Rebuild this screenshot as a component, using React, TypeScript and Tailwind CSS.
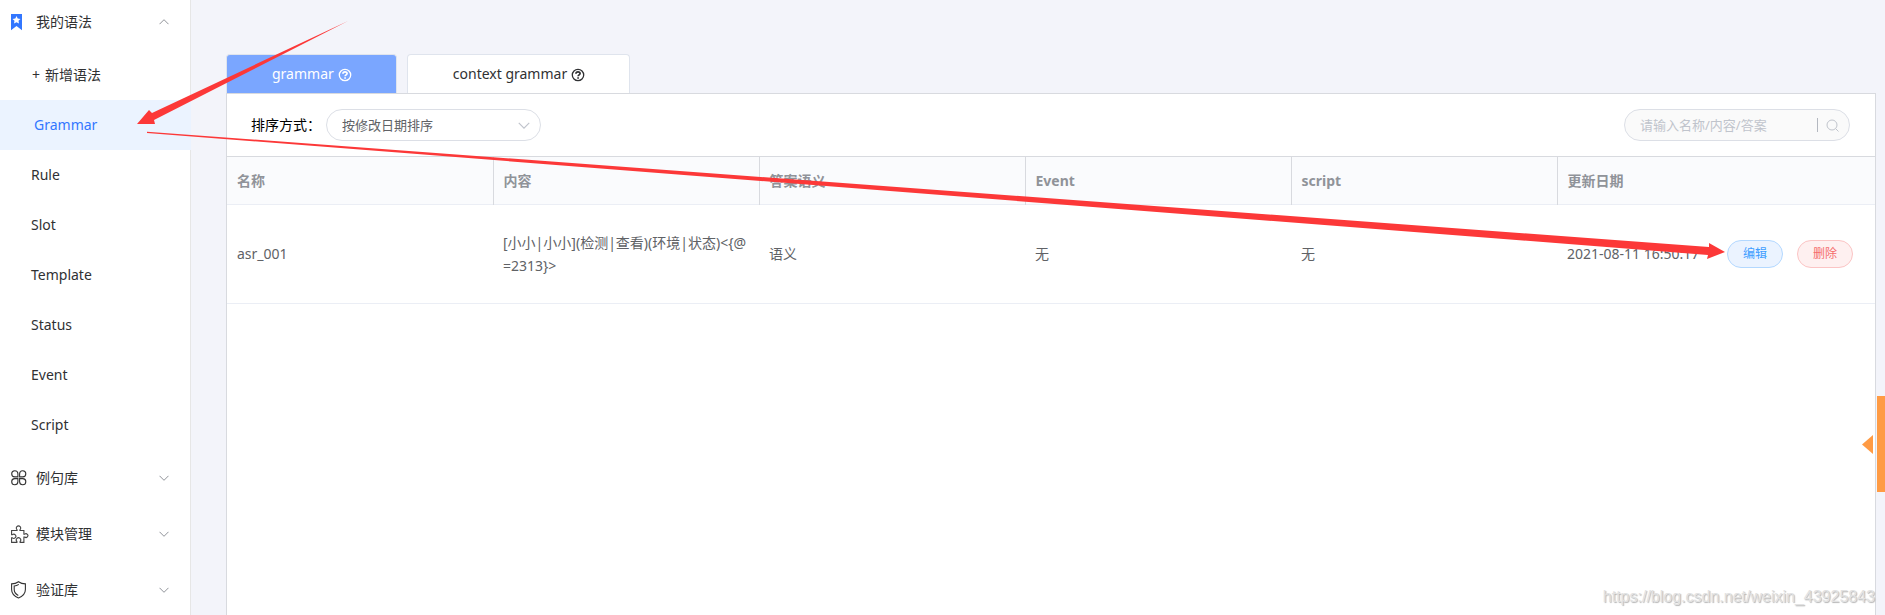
import React from "react";

const subItems = ["Rule", "Slot", "Template", "Status", "Event", "Script"];
const columns = ["名称", "内容", "答案语义", "Event", "script"];

function Chevron({ up = false, className = "" }: { up?: boolean; className?: string }) {
  return (
    <svg viewBox="0 0 10 6" fill="none" stroke="currentColor" className={className}>
      <path d={up ? "M0.5 5.2 5 0.7 9.5 5.2" : "M0.5 0.8 5 5.3 9.5 0.8"} />
    </svg>
  );
}

function BookmarkIcon() {
  return (
    <svg viewBox="0 0 16 17" className="h-[17px] w-4">
      <path fill="#3377ff" d="M0 0h11v16.2l-5.500-4.200L0 16.200z" />
      <path fill="#fff" d="m5.500 2 1.200 2.500 2.800.4-2 1.900.5 2.800-2.500-1.300L3 9.600l.5-2.800-2-1.900 2.800-.4z" />
    </svg>
  );
}

function CloverIcon() {
  return (
    <svg viewBox="0 0 16 16" fill="none" stroke="#333" strokeWidth="1.1" className="size-4">
      <path d="M6.900 6.900H3.700a3.100 3.100 0 1 1 3.200-3.200zM8.600 6.900V3.700a3.100 3.100 0 1 1 3.200 3.200zM6.900 8.600v3.200a3.100 3.100 0 1 1-3.200-3.200zM8.600 8.600h3.200a3.100 3.100 0 1 1-3.200 3.200z" />
    </svg>
  );
}

function PuzzleIcon() {
  return (
    <svg viewBox="0 0 18 18" fill="none" stroke="#444" strokeWidth="1.1" className="h-[18px] w-[18px]">
      <path d="M.6 5.500h5.500V4.800a2.200 2.200 0 1 1 2.800 0v.7h4v3.700h.8a1.900 1.900 0 1 1 0 2.800h-.8v5.400H9.100v-.9a2.200 2.200 0 1 0-3.200 0v.9H.6v-4.500h.8a2.100 2.100 0 1 0 0-3.200H.6z" />
    </svg>
  );
}

function ShieldIcon() {
  return (
    <svg viewBox="0 0 16 18" fill="none" stroke="#333" strokeWidth="1.100" className="h-[18px] w-4">
      <path d="M7.500.7c2 1.500 4.300 2.200 6.900 2.200v5.600c0 4-3 6.900-6.900 8.500C3.600 15.400.6 12.500.6 8.500V2.900C3.200 2.900 5.500 2.200 7.500.7z" />
      <path d="M7.800 3.400C6.400 4.400 4.800 4.900 3.200 5v3.600c0 2.800 1.700 4.700 4.100 5.900" />
    </svg>
  );
}

function HelpIcon() {
  return (
    <svg viewBox="0 0 14 14" fill="none" stroke="currentColor" className="mt-0.5 size-3.5">
      <circle cx="7" cy="7" r="5.700" strokeWidth="1.300" />
      <path d="M4.900 5.700C5 4.300 5.900 3.800 7 3.800s2.100.6 2.100 1.700c0 1.300-2 1.400-2 2.700M7.100 9.200v1.600" strokeWidth="1.700" />
    </svg>
  );
}

function MenuHeader({ icon, label, open = false }: { icon: React.ReactNode; label: string; open?: boolean }) {
  return (
    <button
      type="button"
      className={`flex w-full shrink-0 items-center pr-[21px] pl-[11px] text-left ${open ? "h-[50px] pb-1.5" : "h-14"}`}
    >
      <span className="w-[25px]">{icon}</span>
      <span className="flex-1">{label}</span>
      <Chevron up={open} className="h-1.5 w-2.5 text-[#909399]" />
    </button>
  );
}

export default function App() {
  return (
    <div
      className="relative flex h-screen overflow-hidden bg-[#f3f4fa] text-sm text-[#303133]"
      style={{ fontFamily: '"Noto Sans", "Noto Sans CJK SC", sans-serif' }}
    >
      <nav className="flex w-[191px] shrink-0 flex-col border-r border-[#e6e6e6] bg-white">
        <MenuHeader icon={<BookmarkIcon />} label="我的语法" open />
        <a href="#new" className="flex h-[50px] shrink-0 items-center gap-[5px] pl-8">
          <span>+</span>
          <span>新增语法</span>
        </a>
        <a href="#grammar" className="-mr-px flex h-[50px] shrink-0 items-center bg-[#ebf3ff] pl-[34px] text-[#3377ff]">
          Grammar
        </a>
        {subItems.map((s) => (
          <a key={s} href={`#${s}`} className="flex h-[50px] shrink-0 items-center pl-[31px]">
            {s}
          </a>
        ))}
        <MenuHeader icon={<CloverIcon />} label="例句库" />
        <MenuHeader icon={<PuzzleIcon />} label="模块管理" />
        <MenuHeader icon={<ShieldIcon />} label="验证库" />
      </nav>

      <main className="flex min-w-0 flex-1 flex-col pt-[54px] pr-[9px] pl-[35px]">
        <div className="flex gap-2.5">
          <button
            type="button"
            className="flex h-[39px] items-center gap-1 rounded-t border border-b-0 border-[#dfe4ed] bg-[#7aa6ff] pr-11 pl-[45px] text-white"
          >
            grammar <HelpIcon />
          </button>
          <button
            type="button"
            className="flex h-[39px] items-center gap-1 rounded-t border border-b-0 border-[#dfe4ed] bg-white pr-11 pl-[45px]"
          >
            context grammar <HelpIcon />
          </button>
        </div>

        <section className="flex-1 border border-b-0 border-[#d8dadf] bg-white">
          <div className="flex h-[62px] items-center justify-between pr-[25px] pl-6">
            <div className="flex items-center">
              <label htmlFor="sort" className="w-[75px] text-black">排序方式：</label>
              <div className="relative flex items-center">
                <select
                  id="sort"
                  className="h-8 w-[215px] appearance-none rounded-full border border-[#dcdfe6] bg-white pl-[15px] text-[13px] text-[#606266]"
                >
                  <option>按修改日期排序</option>
                </select>
                <Chevron className="pointer-events-none absolute right-[11px] h-[7px] w-3 text-[#c0c4cc]" />
              </div>
            </div>
            <div className="flex h-8 w-[226px] items-center rounded-full border border-[#dcdfe6] bg-[#fafafa] pr-2.5 pl-[15px] text-[#c0c4cc]">
              <input
                type="text"
                aria-label="请输入名称/内容/答案"
                placeholder="请输入名称/内容/答案"
                className="min-w-0 flex-1 bg-transparent text-[13px] outline-none placeholder:text-[#c0c4cc]"
              />
              <span className="mr-2 h-3.5 w-px bg-[#b4b8c0]" />
              <button type="button" aria-label="搜索">
                <svg viewBox="0 0 13 13" fill="none" stroke="currentColor" className="block size-[13px]">
                  <circle cx="6" cy="6" r="5" />
                  <path d="m9.700 9.700 2.800 2.800" />
                </svg>
              </button>
            </div>
          </div>

          <table className="w-full table-fixed border-collapse text-left text-[#606266]">
            <colgroup>
              <col className="w-[266px]" />
              <col className="w-[266px]" />
              <col className="w-[266px]" />
              <col className="w-[266px]" />
              <col className="w-[266px]" />
              <col />
            </colgroup>
            <thead>
              <tr className="h-12 border-t border-b border-t-[#d8dadf] border-b-[#ebeef5] bg-[#fafbfd] text-[#909399]">
                {columns.map((c) => (
                  <th key={c} className="border-r border-[#d8dadf] px-2.5 font-bold">{c}</th>
                ))}
                <th className="px-2.5 font-bold">更新日期</th>
              </tr>
            </thead>
            <tbody>
              <tr className="h-[99px] border-b border-[#ebeef5]">
                <td className="px-2.5">asr_001</td>
                <td className="pr-2 pl-2.5 leading-[23px] break-all">{"[小小|小小](检测|查看)(环境|状态)<{@=2313}>"}</td>
                <td className="px-2.5">语义</td>
                <td className="px-2.5">无</td>
                <td className="px-2.5">无</td>
                <td className="pr-[22px] pl-2.5">
                  <div className="flex items-center justify-between">
                    <span>2021-08-11 16:50:17</span>
                    <span className="flex gap-3.5 text-xs">
                      <button type="button" className="h-7 w-14 rounded-full border border-[#b3d8ff] bg-[#ebf3ff] text-[#409eff]">编辑</button>
                      <button type="button" className="h-7 w-14 rounded-full border border-[#fbc4c4] bg-[#fef0f0] text-[#f56c6c]">删除</button>
                    </span>
                  </div>
                </td>
              </tr>
            </tbody>
          </table>
        </section>
      </main>

      <button
        type="button"
        aria-label="展开"
        className="absolute top-[396px] right-0 flex h-24 items-center gap-1"
      >
        <svg viewBox="0 0 11 19" className="h-[19px] w-[11px]" fill="#ff9b44">
          <path d="M11 0v19L0 9.500z" />
        </svg>
        <span className="h-full w-2 bg-[#ff9b44]" />
      </button>

      <svg viewBox="0 0 1885 615" className="pointer-events-none absolute top-0 left-0 h-[615px] w-[1885px]" fill="#fc3838">
        <path d="M348 21 152 113l-3-3-12 14 18 0-1-4z" />
        <path d="M147 131.700 1709 247v-4l16 9-18 7 1-4L147 133z" />
      </svg>

      <p
        className="absolute right-2.5 bottom-[6px] text-base text-[#e2e2e2] [text-shadow:1px_1px_1px_#b4b4b4]"
        style={{ fontFamily: '"Liberation Sans", Arial, sans-serif' }}
      >
        https://blog.csdn.net/weixin_43925843
      </p>
    </div>
  );
}
